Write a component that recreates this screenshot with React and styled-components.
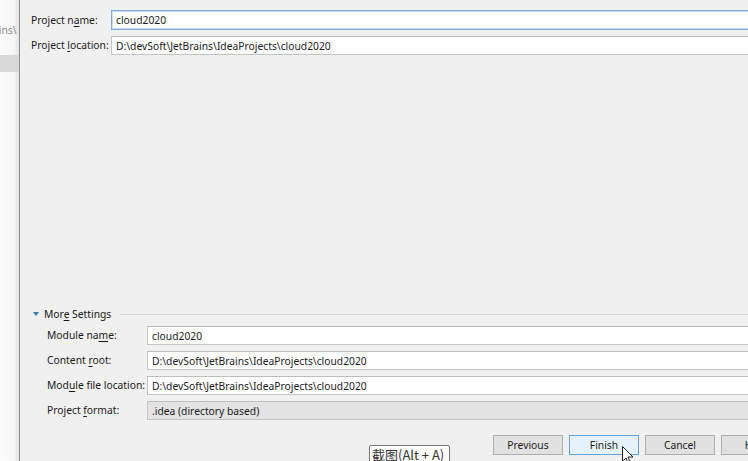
import React from "react";
import styled, { createGlobalStyle, css } from "styled-components";

const Global = createGlobalStyle`
  html, body { margin: 0; padding: 0; }
  body {
    width: 748px;
    height: 461px;
    overflow: hidden;
    background: #f0f0f0;
    font-family: "Noto Sans", "Open Sans", sans-serif;
    font-size: 10.3px;
    color: #1a1a1a;
  }
`;

const Page = styled.div`
  display: flex;
  width: 748px;
  height: 461px;
  overflow: hidden;
  position: relative;
`;

const Backdrop = styled.div`
  flex: 0 0 19px;
  display: flex;
  flex-direction: column;
  overflow: hidden;
  background: linear-gradient(to right, #fbfbfb 0%, #f7f7f7 70%, #e4e4e4 100%);
  border-right: 1px solid #8c8c8c;
`;

const BackdropText = styled.div`
  height: 55px;
  display: flex;
  align-items: center;
  padding-top: 4px;
  box-sizing: border-box;
  margin-left: -7px;
  color: #8a8a8a;
  white-space: nowrap;
`;

const BackdropBar = styled.div`
  height: 17px;
  background: #d8d8d8;
`;

const Dialog = styled.div`
  flex: 0 0 780px;
  display: flex;
  flex-direction: column;
  background: #f0f0f0;
  padding: 10px 9px 0 11px;
  box-sizing: border-box;
`;

const Form = styled.div`
  display: grid;
  grid-template-columns: ${(p) => p.$labelWidth}px 1fr;
  row-gap: 6px;
  align-items: center;
  padding-left: ${(p) => p.$indent || 0}px;
`;

const Label = styled.label`
  white-space: nowrap;
  line-height: 19px;
  u { text-decoration: underline; text-underline-offset: 2px; }
`;

const Field = styled.div`
  height: ${(p) => (p.$focused ? 20 : 19)}px;
  box-sizing: border-box;
  display: flex;
  align-items: center;
  padding-left: 4px;
  white-space: nowrap;
  background: ${(p) => (p.$combo ? "#e3e3e3" : "#ffffff")};
  border: 1px solid #c4c4c4;
  border-top-color: #bdbdbd;
  ${(p) =>
    p.$focused &&
    css`
      border: 1px solid #7aaad6;
      box-shadow: inset 0 0 0 1px #c8ddf2;
    `}
`;

const Spacer = styled.div`
  flex: 1;
`;

const SectionHeader = styled.div`
  display: flex;
  align-items: center;
  gap: 5px;
  height: 12px;
  margin-bottom: 6px;
  padding-left: 2px;
`;

const Triangle = styled.span`
  width: 0;
  height: 0;
  border-left: 3px solid transparent;
  border-right: 3px solid transparent;
  border-top: 4px solid #3a78c2;
`;

const SectionTitle = styled.span`
  white-space: nowrap;
  u { text-decoration: underline; text-underline-offset: 2px; }
`;

const Rule = styled.div`
  flex: 1;
  height: 1px;
  background: #d3d3d3;
  margin-left: 4px;
`;

const ButtonRow = styled.div`
  display: flex;
  justify-content: flex-end;
  gap: 6px;
  margin-top: 15px;
  margin-bottom: 6px;
  position: relative;
`;

const Button = styled.div`
  width: 70px;
  height: 20px;
  box-sizing: border-box;
  display: flex;
  align-items: center;
  justify-content: center;
  background: ${(p) => (p.$default ? "#e5f1fb" : "#e1e1e1")};
  border: 1px solid ${(p) => (p.$default ? "#5fa2dd" : "#adadad")};
  color: #1e1e1e;
  position: relative;
`;

const Tooltip = styled.div`
  position: absolute;
  left: 369px;
  top: 445px;
  height: 20px;
  padding: 0 5px 0 2px;
  box-sizing: border-box;
  background: #fdfdfd;
  border: 1px solid #767676;
  border-radius: 2px;
  font-family: "Noto Sans CJK SC", "Noto Sans", sans-serif;
  font-size: 13px;
  line-height: 18px;
  color: #333;
  white-space: nowrap;
`;

const Cursor = styled.svg`
  position: absolute;
  left: 52px;
  top: 10px;
`;

const u = (t) => <u>{t}</u>;

export default function App() {
  return (
    <>
      <Global />
      <Page>
        <Backdrop>
          <BackdropText>ains\</BackdropText>
          <BackdropBar />
        </Backdrop>
        <Dialog>
          <Form $labelWidth={80}>
            <Label>Project n{u("a")}me:</Label>
            <Field $focused>cloud2020</Field>
            <Label>Project {u("l")}ocation:</Label>
            <Field>D:\devSoft\JetBrains\IdeaProjects\cloud2020</Field>
          </Form>
          <Spacer />
          <SectionHeader>
            <Triangle />
            <SectionTitle>Mor{u("e")} Settings</SectionTitle>
            <Rule />
          </SectionHeader>
          <Form $labelWidth={100} $indent={16}>
            <Label>Module na{u("m")}e:</Label>
            <Field>cloud2020</Field>
            <Label>Content {u("r")}oot:</Label>
            <Field>D:\devSoft\JetBrains\IdeaProjects\cloud2020</Field>
            <Label>Mod{u("u")}le file location:</Label>
            <Field>D:\devSoft\JetBrains\IdeaProjects\cloud2020</Field>
            <Label>Project {u("f")}ormat:</Label>
            <Field $combo>.idea (directory based)</Field>
          </Form>
          <ButtonRow>
            <Button>Previous</Button>
            <Button $default>
              Finish
              <Cursor width="12" height="19" viewBox="0 0 12 19">
                <path
                  d="M0.5 0.5 L0.5 15.5 L4 12 L6.5 17.5 L8.5 16.5 L6 11 L11 11 Z"
                  fill="#ffffff"
                  stroke="#222"
                  strokeWidth="1"
                  strokeLinejoin="round"
                />
              </Cursor>
            </Button>
            <Button>Cancel</Button>
            <Button>Help</Button>
          </ButtonRow>
        </Dialog>
        <Tooltip>截图(Alt + A)</Tooltip>
      </Page>
    </>
  );
}
